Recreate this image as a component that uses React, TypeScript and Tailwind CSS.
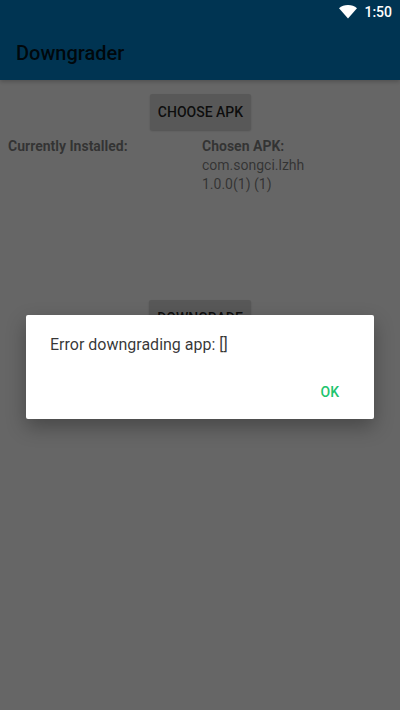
function ActionButton({ label }: { label: string }) {
  return (
    <button className="h-[36px] rounded-[2px] bg-[#dcdcdc] px-2 text-[14px] leading-[36px] font-medium text-black/85 shadow-[0_1px_2px_rgba(0,0,0,0.2)]">
      {label}
    </button>
  );
}

export default function App() {
  return (
    <div className="relative h-[710px] w-[400px] overflow-hidden bg-white font-['Roboto',sans-serif]">
      {/* App bar, runs under the status bar */}
      <div className="flex h-[80px] items-center bg-[#0083cc] pt-[26px] pl-4 shadow-[0_2px_4px_rgba(0,0,0,0.2)]">
        <h1 className="text-[20px] font-medium text-black/85">Downgrader</h1>
      </div>

      {/* Content */}
      <div className="flex flex-col">
        <div className="mt-[14px] flex justify-center pl-px">
          <ActionButton label="CHOOSE APK" />
        </div>
        <div className="mt-[7px] grid grid-cols-[194px_1fr] pl-2 text-[14px] leading-[19px] text-black/50">
          <p className="font-bold">Currently Installed:</p>
          <div>
            <p className="font-bold">Chosen APK:</p>
            <p>com.songci.lzhh</p>
            <p>1.0.0(1) (1)</p>
          </div>
        </div>
        <div className="mt-[106px] flex justify-center">
          <ActionButton label="DOWNGRADE" />
        </div>
      </div>

      {/* Scrim */}
      <div className="absolute inset-0 bg-black/60" />

      {/* Status icons */}
      <div className="absolute top-0 right-2 flex h-[24px] items-center gap-[7px] text-[14px] font-medium text-white">
        <svg width="18" height="14" viewBox="0 0 18 14" className="mt-[-1px]">
          <path d="M9 13.5 0 3.2C2.4 1.2 5.5 0 9 0s6.6 1.2 9 3.2z" fill="#fff" />
        </svg>
        <span>1:50</span>
      </div>

      {/* Dialog */}
      <div className="absolute top-[315px] left-[26px] flex h-[104px] w-[348px] flex-col rounded-[2px] bg-white shadow-[0_8px_20px_rgba(0,0,0,0.3)]">
        <p className="pt-[18px] pl-[24px] text-[16px] leading-[24px] text-black/80">Error downgrading app: []</p>
        <div className="mt-auto flex justify-end pr-[35px] pb-[19px]">
          <span className="text-[14px] leading-[16px] font-medium text-[#1dc46e]">OK</span>
        </div>
      </div>
    </div>
  );
}
